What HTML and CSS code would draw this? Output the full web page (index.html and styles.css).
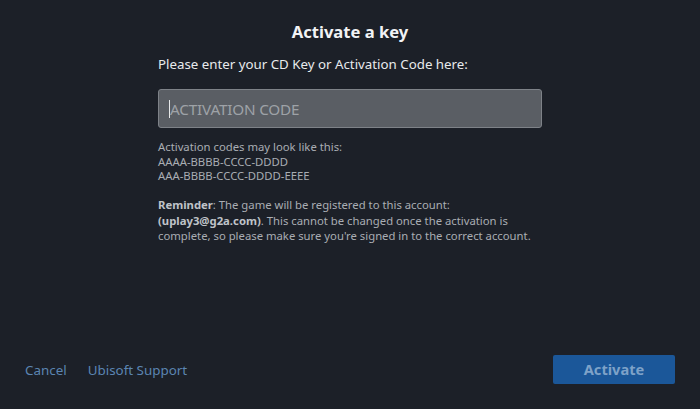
FILE: index.html
```html
<!DOCTYPE html>
<html lang="en">

<head>
    <meta charset="UTF-8">
    <meta name="viewport" content="width=device-width, initial-scale=1.0">
    <title>Activate a key</title>
    <link rel="stylesheet" href="styles.css">
</head>

<body>
    <div class="dialog">
        <div class="content">
            <h1 class="title">Activate a key</h1>
            <p class="prompt">Please enter your CD Key or Activation Code here:</p>
            <div class="field">
                <span class="caret"></span>
                <span class="placeholder">ACTIVATION CODE</span>
            </div>
            <p class="hint">
                Activation codes may look like this:<br>
                AAAA-BBBB-CCCC-DDDD<br>
                AAA-BBBB-CCCC-DDDD-EEEE
            </p>
            <p class="hint">
                <b>Reminder</b>: The game will be registered to this account:<br>
                <b>(uplay3@g2a.com)</b>. This cannot be changed once the activation is<br>
                complete, so please make sure you're signed in to the correct account.
            </p>
        </div>
        <div class="footer">
            <a class="link">Cancel</a>
            <a class="link">Ubisoft Support</a>
            <a class="btn">Activate</a>
        </div>
    </div>
</body>

</html>
```

FILE: styles.css
```css
* {
    margin: 0;
    padding: 0;
    box-sizing: border-box;
}

html,
body {
    width: 100%;
    height: 100%;
}

body {
    background-color: #1c2028;
    font-family: "Noto Sans", "Open Sans", sans-serif;
    color: #e4e6e9;
}

.dialog {
    display: flex;
    flex-direction: column;
    height: 100%;
}

.content {
    width: 384px;
    margin: 0 auto;
    padding-top: 20px;
}

.title {
    font-size: 16.6px;
    font-weight: bold;
    text-align: center;
    color: #f2f3f5;
    line-height: 24px;
}

.prompt {
    margin-top: 11px;
    font-size: 13.3px;
    line-height: 18px;
    color: #e8eaec;
}

.field {
    display: flex;
    align-items: center;
    margin-top: 16px;
    height: 39px;
    padding-left: 10px;
    background-color: #5a5e64;
    border: 1px solid #7e8288;
    border-radius: 3px;
}

.caret {
    width: 1px;
    height: 18px;
    background-color: #e6e8ea;
}

.placeholder {
    font-size: 15.3px;
    color: #9ea2a7;
    letter-spacing: -0.2px;
}

.hint {
    margin-top: 12px;
    font-size: 11.3px;
    line-height: 14.7px;
    color: #a9adb3;
}

.hint + .hint {
    margin-top: 13px;
    line-height: 15.4px;
}

.hint b {
    color: #bfc3c8;
}

.footer {
    display: flex;
    align-items: center;
    margin-top: auto;
    padding: 0 25px 25px 25px;
}

.link {
    font-size: 13.4px;
    color: #5b85b2;
    margin-right: 21px;
    cursor: pointer;
}

.btn {
    margin-left: auto;
    width: 122px;
    height: 29px;
    line-height: 29px;
    text-align: center;
    font-size: 14.6px;
    font-weight: bold;
    color: #7ea2c8;
    background-color: #1b5799;
    border-radius: 2px;
    cursor: pointer;
}
```
